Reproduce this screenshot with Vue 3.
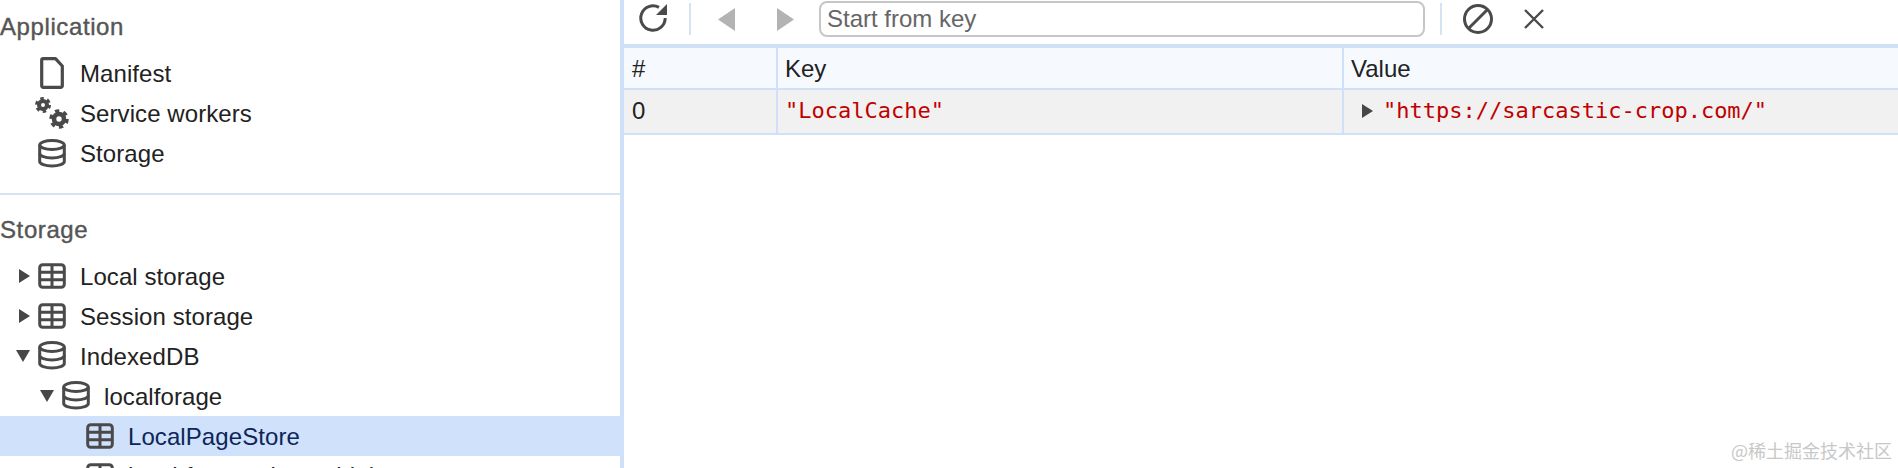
<script setup>
const appRows = [
  { label: 'Manifest', icon: 'file' },
  { label: 'Service workers', icon: 'gears' },
  { label: 'Storage', icon: 'db' }
]

const storageRows = [
  { label: 'Local storage', icon: 'table', arrow: 'right', level: 0 },
  { label: 'Session storage', icon: 'table', arrow: 'right', level: 0 },
  { label: 'IndexedDB', icon: 'db', arrow: 'down', level: 0 },
  { label: 'localforage', icon: 'db', arrow: 'down', level: 1 },
  { label: 'LocalPageStore', icon: 'table', level: 2, selected: true },
  { label: 'local-forage-detect-blob-support', icon: 'table', level: 2 }
]
</script>

<template>
  <div class="devtools">
    <aside class="sidebar">
      <section class="group group-app">
        <h3 class="group-title">Application</h3>
        <div v-for="row in appRows" :key="row.label" class="tree-row">
          <span class="arrow-slot"></span>
          <svg v-if="row.icon === 'file'" class="icon" viewBox="0 0 28 40">
            <path d="M5.200 4.700H17.500L24.300 12V31.800a1.500 1.500 0 0 1-1.500 1.500H5.200a1.500 1.500 0 0 1-1.500-1.500V6.200a1.500 1.500 0 0 1 1.500-1.500z" fill="none" stroke="#4a4a4a" stroke-width="3.200" stroke-linejoin="round" />
          </svg>
          <svg v-else-if="row.icon === 'gears'" class="icon" viewBox="0 0 28 40">
            <circle cx="5" cy="11" r="4" fill="none" stroke="#4a4a4a" stroke-width="4" />
            <circle cx="5" cy="11" r="6.500" fill="none" stroke="#4a4a4a" stroke-width="3" stroke-dasharray="3.400 3.400" />
            <circle cx="21" cy="25" r="5" fill="none" stroke="#4a4a4a" stroke-width="4.600" />
            <circle cx="21" cy="25" r="8" fill="none" stroke="#4a4a4a" stroke-width="3.600" stroke-dasharray="4.200 4.180" />
          </svg>
          <svg v-else class="icon" viewBox="0 0 28 40">
            <g fill="none" stroke="#4a4a4a" stroke-width="3">
              <ellipse cx="14" cy="11" rx="12.300" ry="4.500" />
              <path d="M1.700 11v16.500c0 2.500 5.500 4.500 12.300 4.500s12.300-2 12.300-4.500V11" />
              <path d="M1.700 19.500c0 2.500 5.500 4.500 12.300 4.500s12.300-2 12.300-4.500" />
            </g>
          </svg>
          <span class="tree-label">{{ row.label }}</span>
        </div>
      </section>

      <section class="group group-storage">
        <h3 class="group-title">Storage</h3>
        <div class="tree">
          <div
            v-for="row in storageRows"
            :key="row.label"
            class="tree-row"
            :class="{ selected: row.selected }"
            :style="{ paddingLeft: row.level * 24 + 'px' }"
          >
            <span class="arrow-slot">
              <i v-if="row.arrow" :class="'arrow-' + row.arrow"></i>
            </span>
            <svg v-if="row.icon === 'table'" class="icon" viewBox="0 0 28 40">
              <g fill="none" stroke="#4a4a4a" stroke-width="3">
                <rect x="1.700" y="8.700" width="24.600" height="22.600" rx="3" />
                <path d="M14 8.700v22.600M1.700 16.200h24.600M1.700 23.700h24.600" />
              </g>
            </svg>
            <svg v-else class="icon" viewBox="0 0 28 40">
              <g fill="none" stroke="#4a4a4a" stroke-width="3">
                <ellipse cx="14" cy="11" rx="12.300" ry="4.500" />
                <path d="M1.700 11v16.500c0 2.500 5.500 4.500 12.300 4.500s12.300-2 12.300-4.500V11" />
                <path d="M1.700 19.500c0 2.500 5.500 4.500 12.300 4.500s12.300-2 12.300-4.500" />
              </g>
            </svg>
            <span class="tree-label">{{ row.label }}</span>
          </div>
        </div>
      </section>
    </aside>

    <main class="main">
      <div class="toolbar">
        <button class="tool tool-reload" aria-label="Refresh">
          <svg width="32" height="32" viewBox="0 0 32 32">
            <path d="M27.200 15A12.200 12.200 0 1 1 21 4.400" fill="none" stroke="#4a4a4a" stroke-width="3" />
            <path d="M29 1V12H18z" fill="#4a4a4a" />
          </svg>
        </button>
        <span class="tool-sep"></span>
        <button class="tool tool-back" aria-label="Previous">
          <svg width="17" height="23" viewBox="0 0 17 23"><path d="M17 0v23L0 11.500z" fill="#b3b3b3" /></svg>
        </button>
        <button class="tool tool-next" aria-label="Next">
          <svg width="17" height="23" viewBox="0 0 17 23"><path d="M0 0v23l17-11.500z" fill="#b3b3b3" /></svg>
        </button>
        <input class="key-input" placeholder="Start from key" />
        <span class="tool-sep"></span>
        <button class="tool tool-block" aria-label="Clear">
          <svg width="32" height="32" viewBox="0 0 32 32">
            <circle cx="16" cy="16" r="13.500" fill="none" stroke="#4a4a4a" stroke-width="3" />
            <path d="M7 25L25 7" stroke="#4a4a4a" stroke-width="3" />
          </svg>
        </button>
        <button class="tool tool-close" aria-label="Delete">
          <svg width="22" height="22" viewBox="0 0 22 22">
            <path d="M2 2l18 18M20 2L2 20" stroke="#4a4a4a" stroke-width="2.400" />
          </svg>
        </button>
      </div>

      <div class="grid grid-head">
        <div class="cell">#</div>
        <div class="cell">Key</div>
        <div class="cell">Value</div>
      </div>
      <div class="grid grid-row">
        <div class="cell">0</div>
        <div class="cell mono">"LocalCache"</div>
        <div class="cell mono value-cell"><i class="arrow-right"></i>"https://sarcastic-crop.com/"</div>
      </div>
    </main>

    <span class="watermark">@稀土掘金技术社区</span>
  </div>
</template>

<style>
html, body {
  margin: 0;
  background: #fff;
}
</style>

<style scoped>
.devtools {
  position: relative;
  display: flex;
  width: 1898px;
  height: 468px;
  overflow: hidden;
  background: #fff;
  font-family: "Liberation Sans", Arial, sans-serif;
  font-size: 24px;
  color: #222;
}

.sidebar {
  flex: none;
  width: 620px;
  border-right: 4px solid #cfe0f8;
}

.group-app {
  padding: 7px 0 19px;
  border-bottom: 2px solid #d6e3f3;
}

.group-storage {
  padding-top: 15px;
}

.group-title {
  margin: 0;
  height: 40px;
  line-height: 40px;
  font-size: 24px;
  font-weight: 400;
  letter-spacing: 0.6px;
  color: #555;
  -webkit-text-stroke: 0.4px #555;
}

.group-app .group-title {
  margin-bottom: 7px;
}

.group-storage .group-title {
  margin-bottom: 6px;
}

.tree-row {
  display: flex;
  align-items: center;
  height: 40px;
  white-space: nowrap;
}

.tree-row.selected {
  background: #d0e1fb;
  margin-right: -4px;
  color: #0e2559;
}

.arrow-slot {
  flex: none;
  display: flex;
  align-items: center;
  justify-content: flex-end;
  width: 38px;
  padding-right: 8px;
  box-sizing: border-box;
}

.arrow-right {
  display: inline-block;
  width: 0;
  height: 0;
  border-left: 11px solid #474747;
  border-top: 7px solid transparent;
  border-bottom: 7px solid transparent;
}

.arrow-down {
  display: inline-block;
  width: 0;
  height: 0;
  border-top: 12px solid #474747;
  border-left: 7px solid transparent;
  border-right: 7px solid transparent;
}

.icon {
  flex: none;
  width: 28px;
  height: 40px;
  overflow: visible;
}

.tree-label {
  margin-left: 14px;
  letter-spacing: 0.08px;
}

.tree .tree-label {
  padding-top: 2px;
}

.tree .tree-row:last-child .tree-label {
  padding-top: 0;
}

.main {
  flex: 1;
  min-width: 0;
}

.toolbar {
  display: flex;
  align-items: center;
  height: 38px;
  padding-bottom: 6px;
  border-bottom: 4px solid #d0e0f5;
}

.tool {
  display: flex;
  align-items: center;
  justify-content: center;
  padding: 0;
  border: 0;
  background: none;
}

.tool-reload {
  width: 60px;
  margin-right: 5px;
}

.tool-sep {
  flex: none;
  width: 2px;
  height: 32px;
  background: #d6e3f3;
}

.tool-back {
  margin-left: 27px;
}

.tool-next {
  margin-left: 42px;
}

.key-input {
  box-sizing: border-box;
  width: 606px;
  height: 36px;
  margin-left: 25px;
  margin-right: 15px;
  padding: 0 6px;
  border: 2px solid #c6c6c6;
  border-radius: 8px;
  outline: none;
  font: 24px "Liberation Sans", Arial, sans-serif;
}

.key-input::placeholder {
  color: #666;
  opacity: 1;
}

.tool-block {
  margin-left: 20px;
}

.tool-close {
  margin-left: 29px;
}

.grid {
  display: grid;
  grid-template-columns: 154px 566px 1fr;
  border-bottom: 2px solid #cfe0f8;
}

.grid-head {
  height: 40px;
  background: #f6f9fe;
}

.grid-head .cell {
  padding-top: 2px;
}

.grid-row {
  height: 43px;
  background: #f1f1f1;
}

.grid-row .cell {
  padding-bottom: 2px;
}

.cell {
  display: flex;
  align-items: center;
  padding-left: 7px;
  border-right: 2px solid #cfe0f8;
  white-space: nowrap;
}

.cell:first-child {
  padding-left: 8px;
}

.cell:last-child {
  border-right: 0;
}

.mono {
  font-family: "DejaVu Sans Mono", "Liberation Mono", monospace;
  font-size: 22px;
  color: #c00000;
}

.value-cell .arrow-right {
  margin: 0 10px 0 11px;
}

.watermark {
  position: absolute;
  right: 6px;
  bottom: 3px;
  font-family: "Noto Sans CJK SC", sans-serif;
  font-size: 18px;
  line-height: 30px;
  color: #c8c8c8;
}
</style>
